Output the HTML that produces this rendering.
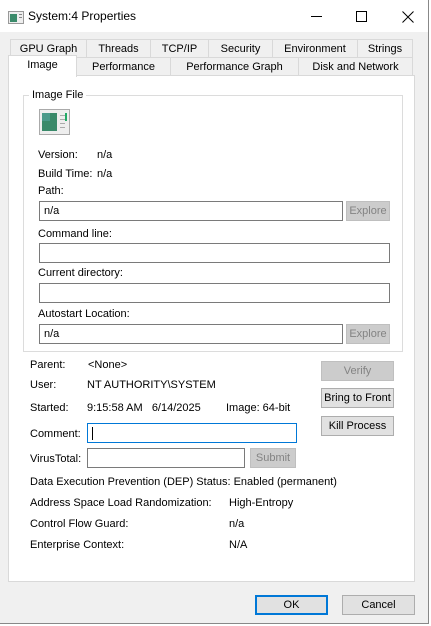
<!DOCTYPE html><html><head><style>
*{margin:0;padding:0;box-sizing:border-box}
body{width:431px;height:626px;background:#fff;font:11px "Liberation Sans",sans-serif;color:#000;position:relative;overflow:hidden}
.a{position:absolute;white-space:nowrap}
.t{margin-top:1px}
.win{position:absolute;left:0;top:0;width:429px;height:624px;border-right:1px solid #888;border-bottom:1px solid #888;background:#f0f0f0}
.tb{position:absolute;left:0;top:0;width:428px;height:32px;background:#fff}
.tab{position:absolute;height:19px;border:1px solid #d9d9d9;background:#f0f0f0;text-align:center;line-height:18px;white-space:nowrap}
.box{position:absolute;background:#fff;border:1px solid #7a7a7a;height:20px;padding-left:4px;line-height:19px}
.btn{position:absolute;background:#e1e1e1;border:1px solid #adadad;height:20px;text-align:center;line-height:19px;white-space:nowrap}
.dis{background:#ccc;border-color:#bfbfbf;color:#838383}
</style></head><body>
<div class="win"></div>
<div class="tb"></div>
<svg class="a" style="left:8px;top:11px" width="16" height="13"><rect x="0.5" y="0.5" width="15" height="12" fill="#eee" stroke="#999"/><rect x="2" y="3" width="7" height="8" fill="#3a8a6a"/><rect x="11" y="3" width="3" height="1" fill="#888"/><rect x="11" y="6" width="3" height="1" fill="#888"/></svg>
<div class="a" style="left:28px;top:9px;font-size:12px">System:4 Properties</div>
<div class="a" style="left:311px;top:16px;width:11px;height:1px;background:#000"></div>
<div class="a" style="left:356px;top:11px;width:11px;height:11px;border:1px solid #000"></div>
<svg class="a" style="left:402px;top:11px" width="12" height="12"><path d="M0.5 0.5L11.5 11.5M11.5 0.5L0.5 11.5" stroke="#000"/></svg>

<div class="tab" style="left:10px;top:39px;width:77px">GPU Graph</div>
<div class="tab" style="left:86px;top:39px;width:65px">Threads</div>
<div class="tab" style="left:150px;top:39px;width:59px">TCP/IP</div>
<div class="tab" style="left:208px;top:39px;width:65px">Security</div>
<div class="tab" style="left:272px;top:39px;width:86px">Environment</div>
<div class="tab" style="left:357px;top:39px;width:56px">Strings</div>
<div class="a" style="left:8px;top:75px;width:407px;height:507px;background:#fff;border:1px solid #d9d9d9"></div>
<div class="tab" style="left:76px;top:57px;width:95px">Performance</div>
<div class="tab" style="left:170px;top:57px;width:129px">Performance Graph</div>
<div class="tab" style="left:298px;top:57px;width:115px">Disk and Network</div>
<div class="tab" style="left:8px;top:55px;width:69px;height:22px;background:#fff;border-bottom:none;line-height:18px">Image</div>

<div class="a" style="left:23px;top:95px;width:380px;height:257px;border:1px solid #dcdcdc"></div>
<div class="a" style="left:29px;top:89px;background:#fff;padding:0 3px">Image File</div>
<svg class="a" style="left:39px;top:109px" width="31" height="26"><rect x="0.5" y="0.5" width="30" height="25" fill="#eee" stroke="#aaa"/><rect x="3" y="4" width="15" height="18" fill="#3a8a6a"/><rect x="3" y="4" width="8" height="8" fill="#4a9a8a"/><rect x="21" y="6" width="5" height="1" fill="#aaa"/><rect x="21" y="10" width="5" height="1" fill="#aaa"/><rect x="21" y="14" width="5" height="1" fill="#aaa"/><rect x="21" y="18" width="5" height="1" fill="#aaa"/><rect x="26" y="4" width="2" height="8" fill="#2a6"/></svg>
<div class="a" style="left:38px;top:149px">Version:</div><div class="a" style="left:97px;top:149px">n/a</div>
<div class="a" style="left:38px;top:168px">Build Time:</div><div class="a" style="left:97px;top:168px">n/a</div>
<div class="a" style="left:38px;top:185px">Path:</div>
<div class="box" style="left:39px;top:201px;width:304px">n/a</div>
<div class="btn dis" style="left:346px;top:201px;width:44px">Explore</div>
<div class="a" style="left:38px;top:228px">Command line:</div>
<div class="box" style="left:39px;top:243px;width:351px"></div>
<div class="a" style="left:38px;top:267px">Current directory:</div>
<div class="box" style="left:39px;top:283px;width:351px"></div>
<div class="a" style="left:38px;top:308px">Autostart Location:</div>
<div class="box" style="left:39px;top:324px;width:304px">n/a</div>
<div class="btn dis" style="left:346px;top:324px;width:44px">Explore</div>

<div class="a" style="left:30px;top:359px">Parent:</div><div class="a" style="left:88px;top:359px">&lt;None&gt;</div>
<div class="a" style="left:30px;top:379px">User:</div><div class="a" style="left:87px;top:379px">NT AUTHORITY\SYSTEM</div>
<div class="a" style="left:30px;top:402px">Started:</div><div class="a" style="left:87px;top:402px">9:15:58 AM&nbsp;&nbsp;&nbsp;6/14/2025</div><div class="a" style="left:226px;top:402px">Image: 64-bit</div>
<div class="btn dis" style="left:321px;top:361px;width:73px">Verify</div>
<div class="btn" style="left:321px;top:388px;width:73px">Bring to Front</div>
<div class="btn" style="left:321px;top:416px;width:73px">Kill Process</div>
<div class="a" style="left:30px;top:428px">Comment:</div>
<div class="box" style="left:87px;top:423px;width:210px;border-color:#0078d7"><span style="display:inline-block;width:1px;height:13px;background:#000;vertical-align:middle"></span></div>
<div class="a" style="left:30px;top:453px">VirusTotal:</div>
<div class="box" style="left:87px;top:448px;width:158px"></div>
<div class="btn dis" style="left:250px;top:448px;width:46px">Submit</div>
<div class="a" style="left:30px;top:476px">Data Execution Prevention (DEP) Status: Enabled (permanent)</div>
<div class="a" style="left:30px;top:497px">Address Space Load Randomization:</div><div class="a" style="left:229px;top:497px">High-Entropy</div>
<div class="a" style="left:30px;top:518px">Control Flow Guard:</div><div class="a" style="left:229px;top:518px">n/a</div>
<div class="a" style="left:30px;top:539px">Enterprise Context:</div><div class="a" style="left:229px;top:539px">N/A</div>

<div class="btn" style="left:255px;top:595px;width:73px;border:2px solid #0078d7;line-height:17px">OK</div>
<div class="btn" style="left:342px;top:595px;width:73px">Cancel</div>
</body></html>
